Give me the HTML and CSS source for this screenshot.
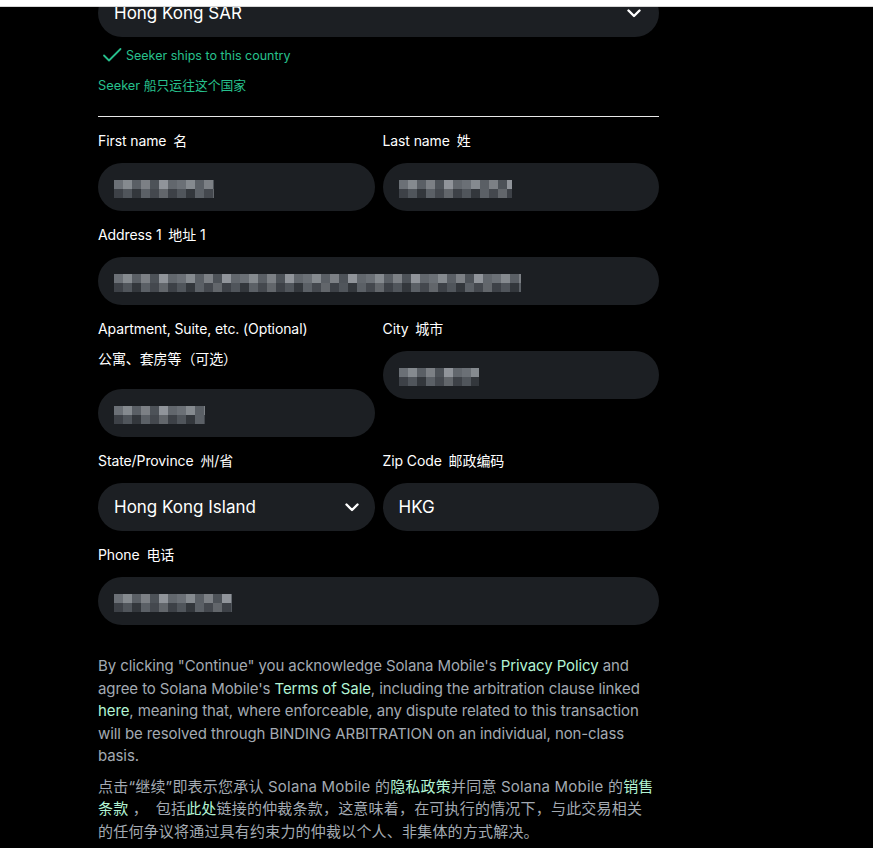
FILE: index.html
```html
<!DOCTYPE html>
<html lang="en">
<head>
    <meta charset="UTF-8">
    <meta name="viewport" content="width=device-width, initial-scale=1.0">
    <title>Shipping address</title>
    <link rel="stylesheet" href="styles.css">
</head>
<body>
    <div class="topbar"></div>

    <main class="checkout">
        <div class="select country">
            <span>Hong Kong SAR</span>
            <svg class="chevron" width="14" height="9" viewBox="0 0 14 9"><path d="M1.5 1.5 7 7l5.5-5.5" fill="none" stroke="#fff" stroke-width="2.4" stroke-linecap="round" stroke-linejoin="round"/></svg>
        </div>

        <div class="ships">
            <svg width="20" height="16" viewBox="0 0 20 16"><path d="M2 8.5 7 13.5 18.5 2" fill="none" stroke="#27c08d" stroke-width="1.8" stroke-linecap="round" stroke-linejoin="round"/></svg>
            <span>Seeker ships to this country</span>
        </div>
        <p class="ships-cn">Seeker 船只运往这个国家</p>

        <hr class="divider">

        <div class="fields">
            <div class="field">
                <label>First name <span class="cn">名</span></label>
                <div class="input"><span class="blur w-first"></span></div>
            </div>
            <div class="field">
                <label>Last name <span class="cn">姓</span></label>
                <div class="input"><span class="blur w-last"></span></div>
            </div>
            <div class="field wide">
                <label>Address 1 <span class="cn">地址 1</span></label>
                <div class="input"><span class="blur w-address"></span></div>
            </div>
            <div class="field">
                <label class="first">Apartment, Suite, etc. (Optional)</label>
                <label class="second">公寓、套房等（可选）</label>
                <div class="input"><span class="blur w-apt"></span></div>
            </div>
            <div class="field">
                <label>City <span class="cn">城市</span></label>
                <div class="input"><span class="blur w-city"></span></div>
            </div>
            <div class="field">
                <label>State/Province <span class="cn">州/省</span></label>
                <div class="select">
                    <span>Hong Kong Island</span>
                    <svg class="chevron" width="14" height="9" viewBox="0 0 14 9"><path d="M1.5 1.5 7 7l5.5-5.5" fill="none" stroke="#fff" stroke-width="2.4" stroke-linecap="round" stroke-linejoin="round"/></svg>
                </div>
            </div>
            <div class="field">
                <label>Zip Code <span class="cn">邮政编码</span></label>
                <div class="input"><span>HKG</span></div>
            </div>
            <div class="field wide">
                <label>Phone <span class="cn">电话</span></label>
                <div class="input"><span class="blur w-phone"></span></div>
            </div>
        </div>

        <p class="legal">By clicking "Continue" you acknowledge Solana Mobile's <a href="#">Privacy Policy</a> and agree to Solana Mobile's <a href="#">Terms of Sale</a>, including the arbitration clause linked <a href="#">here</a>, meaning that, where enforceable, any dispute related to this transaction will be resolved through BINDING ARBITRATION on an individual, non-class basis.</p>
        <p class="legal cn-text">点击“继续”即表示您承认 Solana Mobile 的<a href="#">隐私政策</a>并同意 Solana Mobile 的<a href="#">销售条款</a> ，&ensp;包括<a href="#">此处</a>链接的仲裁条款，这意味着，在可执行的情况下，与此交易相关<br>的任何争议将通过具有约束力的仲裁以个人、非集体的方式解决。</p>
    </main>
</body>
</html>
```

FILE: styles.css
```css
body {
    margin: 0;
    background-color: #000;
    color: #fff;
    font-family: Inter, "Noto Sans CJK SC", sans-serif;
}
.topbar {
    position: fixed;
    top: 0;
    left: 0;
    right: 0;
    height: 6px;
    background-color: #fff;
    border-bottom: 1px solid #d6d6d6;
    z-index: 2;
}
.checkout {
    width: 561px;
    margin: -11px 0 0 98px;
    padding-bottom: 40px;
}
.select, .input {
    height: 48px;
    box-sizing: border-box;
    border-radius: 24px;
    background-color: #1c1f23;
    padding: 0 16px 0 16px;
    display: flex;
    align-items: center;
    font-size: 17px;
    color: #fff;
}
.select {
    justify-content: space-between;
}
.country .chevron {
    margin-right: 2px;
}
.ships {
    display: flex;
    align-items: center;
    gap: 4px;
    margin: 8px 0 0 4px;
    height: 20px;
    font-size: 12.5px;
    color: #27c08d;
}
.ships-cn {
    margin: 11px 0 0;
    font-size: 12.8px;
    line-height: 20px;
    color: #27c08d;
}
.divider {
    margin: 20px 0 0;
    border: 0;
    border-top: 1px solid #e8e8e8;
}
.fields {
    display: grid;
    grid-template-columns: 1fr 1fr;
    column-gap: 8px;
    row-gap: 14px;
    align-items: start;
    margin-top: 14px;
}
.field.wide {
    grid-column: 1 / 3;
}
label {
    display: block;
    font-size: 14px;
    line-height: 20px;
    margin-bottom: 12px;
    letter-spacing: -0.1px;
}
label .cn {
    margin-left: 3px;
}
label.first {
    margin-bottom: 10px;
}
label.second {
    margin-bottom: 20px;
}
.blur {
    display: block;
    height: 18px;
    margin-top: 3px;
    background:
        repeating-linear-gradient(90deg, #6b7076 0 9px, #858a8f 9px 18px, #5a5f65 18px 27px, #7c8085 27px 36px, #4d5258 36px 45px, #90949a 45px 54px, #62676d 54px 63px) top / 100% 50% no-repeat,
        repeating-linear-gradient(90deg, #3d4147 0 9px, #50555b 9px 18px, #33373c 18px 27px, #5b6066 27px 36px, #44484e 36px 45px, #62666b 45px 54px) bottom / 100% 50% no-repeat;
}
.w-first { width: 100px; }
.w-last { width: 113px; }
.w-address { width: 407px; }
.w-apt { width: 91px; }
.w-city { width: 80px; }
.w-phone { width: 118px; }
.legal {
    margin: 30px 0 0;
    font-size: 15px;
    line-height: 22.5px;
    color: #a3aab2;
    letter-spacing: -0.1px;
}
.legal.cn-text {
    margin-top: 8px;
    letter-spacing: 0.2px;
}
.legal a {
    color: #b3f4d4;
    text-decoration: none;
}
```
